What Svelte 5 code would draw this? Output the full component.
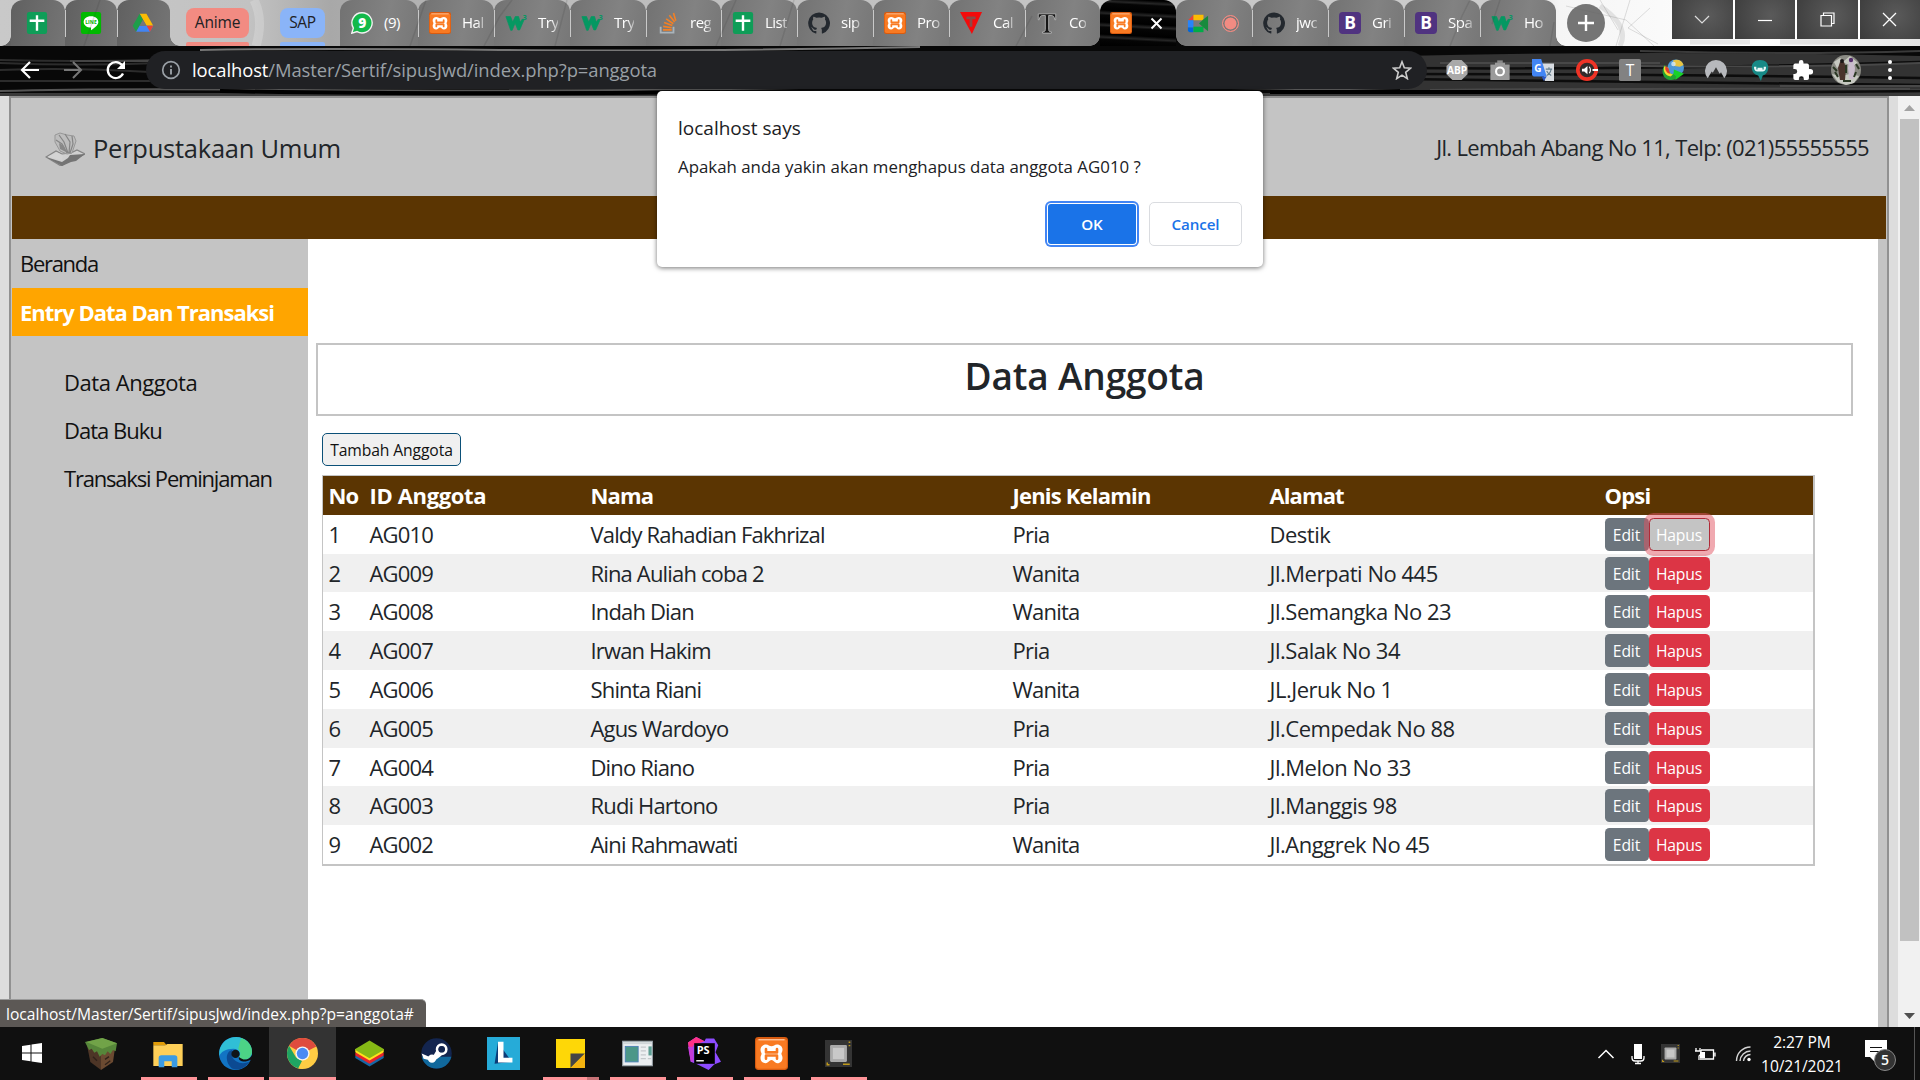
<script>
  const pinned = [
    { icon: 'sheet', w: 54 },
    { icon: 'line', w: 52 },
    { icon: 'drive', w: 53 }
  ];
  const tabs = [
    { icon: 'whatsapp', label: '(9)', w: 78 },
    { icon: 'xampp', label: 'Hal', w: 76 },
    { icon: 'w3', label: 'Try', w: 76 },
    { icon: 'w3', label: 'Try', w: 76 },
    { icon: 'stack', label: 'reg', w: 75 },
    { icon: 'sheet', label: 'List', w: 76 },
    { icon: 'github', label: 'sip', w: 76 },
    { icon: 'xampp', label: 'Pro', w: 76 },
    { icon: 'vred', label: 'Cal', w: 76 },
    { icon: 'tserif', label: 'Co', w: 75 }
  ];
  const tabsAfter = [
    { icon: 'meet', label: '', rec: true, w: 76 },
    { icon: 'github', label: 'jwc', w: 76 },
    { icon: 'boot', label: 'Gri', w: 76 },
    { icon: 'boot', label: 'Spa', w: 76 },
    { icon: 'w3', label: 'Ho', w: 76 }
  ];
  const extensions = ['abp', 'camera', 'translate', 'volume', 'tbox', 'idm', 'nord', 'ghost', 'puzzle'];
  const members = [
    ['AG010', 'Valdy Rahadian Fakhrizal', 'Pria', 'Destik'],
    ['AG009', 'Rina Auliah coba 2', 'Wanita', 'Jl.Merpati No 445'],
    ['AG008', 'Indah Dian', 'Wanita', 'Jl.Semangka No 23'],
    ['AG007', 'Irwan Hakim', 'Pria', 'Jl.Salak No 34'],
    ['AG006', 'Shinta Riani', 'Wanita', 'JL.Jeruk No 1'],
    ['AG005', 'Agus Wardoyo', 'Pria', 'Jl.Cempedak No 88'],
    ['AG004', 'Dino Riano', 'Pria', 'Jl.Melon No 33'],
    ['AG003', 'Rudi Hartono', 'Pria', 'Jl.Manggis 98'],
    ['AG002', 'Aini Rahmawati', 'Wanita', 'Jl.Anggrek No 45']
  ];
  const apps = [
    { icon: 'grass', size: 32 },
    { icon: 'folder', size: 32, run: true },
    { icon: 'edge', size: 33, run: true },
    { icon: 'chrome', size: 31, run: true, active: true },
    { icon: 'blue', size: 31 },
    { icon: 'steam', size: 31 },
    { icon: 'ltile', size: 33 },
    { icon: 'notes', size: 29, run: true, stacked: true },
    { icon: 'window', size: 31, run: true },
    { icon: 'ps', size: 33, run: true },
    { icon: 'xampp', size: 33, run: true },
    { icon: 'chip', size: 27, run: true }
  ];
</script>

{#snippet icon(name, size)}
  <svg class="ic" width={size} height={size} viewBox="0 0 24 24">
    {#if name === 'sheet'}
      <rect x="1" width="22" height="24" rx="2.5" fill="#0f9d58" />
      <path d="M12 3.5v17M4 9.5h16" stroke="#fff" stroke-width="2.6" />
    {:else if name === 'line'}
      <rect x="1" width="22" height="24" rx="2.5" fill="#00b900" />
      <path d="M12 4.5c5 0 8 2.9 8 6.3 0 3.7-4.500 6.200-8 9.200v-3c-4.500-.2-8-2.800-8-6.200s3-6.300 8-6.300z" fill="#fff" />
      <text x="12" y="13" font-size="5.500" font-weight="700" text-anchor="middle" fill="#00b900">LINE</text>
    {:else if name === 'drive'}
      <path d="M8.300 2h7.400l7.500 13h-7.300z" fill="#fbbc04" />
      <path d="M8.300 2L.8 15l3.700 6.500L12 8.500z" fill="#1e9e4a" />
      <path d="M8.200 15h15l-3.700 6.500h-15z" fill="#4285f4" />
      <path d="M15.900 15h7.300l-3.600 6.500z" fill="#ea4335" />
      <path d="M12 8.500l3.900 6.500H8.200z" fill="#777" />
    {:else if name === 'whatsapp'}
      <path d="M12 .8a11 11 0 1 1-5.300 20.600L.8 23.200l1.800-5.700A11 11 0 0 1 12 .8z" fill="#12b94a" stroke="#f2f2f2" stroke-width="1.500" />
      <text x="12.200" y="17.200" font-size="15" font-weight="800" text-anchor="middle" fill="#fff">9</text>
    {:else if name === 'xampp'}
      <rect width="24" height="24" rx="2.500" fill="#d85b10" />
      <rect x=".8" y="1.500" width="22.400" height="21.500" rx="2" fill="#f97a22" />
      <path d="M2.500 2h19" stroke="#ffc39a" stroke-width="1" />
      <path d="M8 5.500c1.800 0 2.400 1.300 4 1.300s2.200-1.300 4-1.300c2.400 0 4 1.700 4 3.700 0 1.500-.8 2.200-.8 3s.8 1.500.8 3c0 2.200-1.500 3.800-3.700 3.800-2.300 0-2.600-2.200-4.300-2.200S10 19 7.700 19C5.500 19 4 17.400 4 15.200c0-1.500.8-2.200.8-3S4 10.700 4 9.200c0-2 1.600-3.700 4-3.700z" fill="#fff" />
      <path d="M8 8.800v2.400h8V8.800M8 15.800v-2.300h8v2.300" fill="none" stroke="#f97a22" stroke-width="1.900" stroke-linecap="round" stroke-linejoin="round" />
    {:else if name === 'w3'}
      <path d="M1 5h5l2.500 6L11.200 5h3.600l1.800 6.200 2-3.200h2.400l-5 11.500h-2l-3-7.500L7.800 20H6.200z" fill="#059862" stroke="#059862" stroke-width=".8" />
      <text x="21.500" y="8.500" font-size="8" font-weight="700" text-anchor="middle" fill="#059862">3</text>
    {:else if name === 'stack'}
      <path d="M4 16v6.500h14V16" fill="none" stroke="#a9b4bb" stroke-width="2" />
      <path d="M6.500 19.500h9.500M6.700 15.700l9.300 1.400M7.800 11.500l8.900 3.300M10 7.500l7.800 5.300M13.500 3.500l5.700 7.500M18 1l2.500 8.500" stroke="#f48024" stroke-width="1.700" />
    {:else if name === 'github'}
      <path d="M12 .5a11.800 11.800 0 0 0-3.700 23c.6.1.8-.3.8-.6v-2.200c-3.300.7-4-1.400-4-1.400-.5-1.400-1.300-1.800-1.300-1.800-1-.7.100-.7.100-.7 1.200.1 1.800 1.200 1.800 1.200 1 1.800 2.800 1.300 3.500 1 .1-.8.400-1.300.7-1.600-2.600-.3-5.400-1.300-5.400-5.900 0-1.300.5-2.300 1.200-3.200-.1-.3-.5-1.500.1-3.200 0 0 1-.3 3.300 1.200a11.500 11.500 0 0 1 6 0c2.300-1.500 3.300-1.200 3.300-1.200.6 1.700.2 2.900.1 3.200.8.900 1.200 1.900 1.200 3.200 0 4.600-2.800 5.600-5.500 5.900.5.400.9 1.100.9 2.200v3.300c0 .3.200.7.800.6A11.800 11.800 0 0 0 12 .5z" fill="#24292f" />
    {:else if name === 'vred'}
      <path d="M0 0h24L13 24z" fill="#f30b0b" />
      <path d="M7 5h10v3h-3.500v8h-3V8H7z" fill="#8c4a46" />
    {:else if name === 'tserif'}
      <path d="M2.500 2h19v6.500h-1C20 5 19 3.800 16.500 3.800h-2.700V19c0 2 .8 2.500 3 2.600V23H7.200v-1.400c2.200-.1 3-.6 3-2.600V3.800H7.500C5 3.800 4 5 3.500 8.500h-1z" fill="#161616" stroke="#c9c9c9" stroke-width=".8" />
    {:else if name === 'meet'}
      <path d="M1 9l6-6v6z" fill="#ea4335" /><path d="M7 3h11v6H7z" fill="#fbbc04" />
      <path d="M1 9h6v8H1z" fill="#2684fc" /><path d="M1 17h6v5H3a2 2 0 0 1-2-2z" fill="#0066da" />
      <path d="M7 16h11v6H7z" fill="#00ac47" /><path d="M13 12.500L18 8l5-4v17l-5-4z" fill="#188a3d" />
    {:else if name === 'boot'}
      <rect width="24" height="24" rx="4" fill="#503380" />
      <text x="12" y="19" font-size="19" font-weight="700" text-anchor="middle" fill="#fff">B</text>
    {:else if name === 'abp'}
      <path d="M7 1h10l6.500 6.500v9L17 23H7L.5 16.500v-9z" fill="#a9a9a9" />
      <text x="12" y="16.300" font-size="12" font-weight="700" text-anchor="middle" textLength="22" lengthAdjust="spacingAndGlyphs" fill="#fff">ABP</text>
    {:else if name === 'camera'}
      <path d="M1.500 6h5v-2h11v2h5v17h-21z" fill="#9b9b9b" /><rect x="9" y="1.500" width="6" height="3" fill="#8a8a8a" />
      <circle cx="12" cy="13.500" r="4.300" fill="#999" stroke="#fff" stroke-width="2.300" />
    {:else if name === 'translate'}
      <path d="M10 5h14v19H14z" fill="#d7dbe0" /><path d="M0 0h10l6 19H2a2 2 0 0 1-2-2z" fill="#4285f4" />
      <path d="M10.500 19H16l-3 5z" fill="#2a56c6" />
      <text x="6.500" y="14" font-size="11" font-weight="700" text-anchor="middle" fill="#fff">G</text>
      <path d="M15 11h7M18.500 9v2M21 11c-1 4-3 6-5 7M16 13c1 2 3 4 5 5" stroke="#647d8c" fill="none" stroke-width="1.200" />
    {:else if name === 'volume'}
      <circle cx="12" cy="12" r="10" fill="#332b2a" stroke="#ef3326" stroke-width="4" />
      <path d="M6.500 10.500h2.500l3.500-3v9l-3.500-3H6.500zM18 11h6v2h-6z" fill="#fff" /><path d="M14.500 8.500q2.500 3.500 0 7" fill="none" stroke="#fff" stroke-width="1.200" />
    {:else if name === 'tbox'}
      <rect x="0" width="24" height="24" rx="2" fill="#828282" />
      <text x="12" y="18" font-size="17" text-anchor="middle" fill="#fff">T</text>
    {:else if name === 'idm'}
      <circle cx="15" cy="9.500" r="9" fill="#4c97d6" /><path d="M12 1.500c5-2 10 0 11.500 5l-4 2-6-1z" fill="#e7c443" /><circle cx="12.500" cy="5.500" r="2.500" fill="#d9ecf8" opacity=".8" />
      <path d="M3 6.500C-1 12 0 20 7 22.500c4 1.300 8 0 10.500-2.500l-5-4c-3 1-5.500-1-5.500-5z" fill="#22a332" />
      <path d="M2.500 8c-2 6 2 11 7 11l2.500-2.500C8 16 6.500 13 7 9.500z" fill="#f5d832" /><path d="M4 7.500c-1.500 4 1 8 5 8.500l-2-6z" fill="#e23b2e" />
      <path d="M13 11.500L24 16l-9.500 7 1-4.500-3-1.500z" fill="#18d227" />
    {:else if name === 'nord'}
      <path d="M3 21A12 12 0 1 1 21 21l-3.500-6.500-1.500 1.500L12 9l-3.500 6-1.200-1.500z" fill="#b7b9bd" />
    {:else if name === 'ghost'}
      <path d="M12 1c6 0 9 3.500 9 8s-2 8-6 9l-2 6-3-6C6 17 3 14 3 9s4-8 9-8z" fill="#178a87" />
      <path d="M5.500 8.500h2.500v3h1.300V9.500h5.400v2H16v-3h2.500v1.500c-.5 2.500-2 3.500-3.500 3.500h-6c-1.500 0-3-1-3.500-3.500z" fill="#e9f7f7" />
    {:else if name === 'puzzle'}
      <path d="M20 11h-1.500V7a2 2 0 0 0-2-2h-4V3.500a2.500 2.500 0 0 0-5 0V5h-4a2 2 0 0 0-2 2v4H3a2.700 2.700 0 0 1 0 5.400H1.500V21a2 2 0 0 0 2 2h4v-1.500a2.700 2.700 0 0 1 5.400 0V23h3.600a2 2 0 0 0 2-2v-4H20a3 3 0 0 0 0-6z" fill="#fff" />
    {:else if name === 'grass'}
      <path d="M1 3L12 8 12 24 4 18z" fill="#4d3526" /><path d="M23 4L12 8v16l9-6z" fill="#6b4a31" />
      <path d="M0 3L13 0l11 4-1 6-2-1-2 3-2-2-2 3-2-1-2 2-2-4-2 1-2-3-2 1z" fill="#56863a" /><path d="M1 3l12-3 11 4-11 4z" fill="#71a348" />
      <path d="M6 14l3 3M15 16l3-2M15 20l4-3" stroke="#30221a" stroke-width="1" />
    {:else if name === 'folder'}
      <path d="M1 3h8l2 2.500H1z" fill="#e19c08" /><path d="M1 5.500h9L11.500 4.500H23v16.500H1z" fill="#fecf58" />
      <path d="M5 22v-7a2 2 0 0 1 2-2h10a2 2 0 0 1 2 2v7h-4.200v-4.500H9.200V22z" fill="#3a9be4" />
    {:else if name === 'edge'}
      <circle cx="12" cy="12" r="12" fill="#1274c4" />
      <path d="M.2 10.500C1.300 4 6.500 0 12.500 0 19 0 24 4.800 24 10.500c0 3.500-2.500 6-6 6-4 0-3.500-1.500-3-2.500 1-2.500-1-5.500-4.500-5.500C5 8.500 1 11 .2 14z" fill="#30bfd6" />
      <path d="M16 .7c4.800 1.500 8 5.500 8 9.800 0 3.500-2.500 6-6 6-4 0-3.500-1.500-3-2.500 1-2 .5-4-1-5.500z" fill="#54d872" opacity=".8" />
      <path d="M9.500 9.500C5 10.500 4 18 9 22.500c4 2.500 10 .5 13-4.500-5 2.300-11 .5-12.500-4z" fill="#0c4a92" />
      <path d="M14.500 14.500c-1 3 4 4.500 8.500 2l2 1.500v-6l-2 2.500c-3 3-6 2-8.500 0z" fill="#111" />
      <circle cx="12" cy="12.300" r="3" fill="#101418" />
    {:else if name === 'chrome'}
      <circle cx="12" cy="12" r="12" fill="#fc4" />
      <path d="M12 12L1.600 6A12 12 0 0 1 22.400 6z" fill="#df4b3e" /><path d="M12 6h10.400l.3.600L12 12z" fill="#df4b3e" />
      <path d="M1.600 6L7 15l5 3-3 5.600A12 12 0 0 1 1.600 6z" fill="#1fa463" /><path d="M17 14.500L12 24a12 12 0 0 1-3.300-.5L12 17z" fill="#fc4" />
      <circle cx="12" cy="12" r="5.500" fill="#f4f4f4" /><circle cx="12" cy="12" r="4.400" fill="#4a8af4" />
    {:else if name === 'blue'}
      <path d="M1 15.500L12 22l11-6.500v-2H1z" fill="#1767a5" /><path d="M1 13.500L12 20l11-6.500v-2H1z" fill="#e6242b" />
      <path d="M1 11L12 17.500 23 11V8.500H1z" fill="#ffe11c" /><path d="M1 8.500L12 2l11 6.500v.7L12 15.700 1 9.200z" fill="#86b915" />
    {:else if name === 'steam'}
      <circle cx="12" cy="12" r="11.800" fill="#13254f" /><path d="M.5 14.500h23A11.800 11.800 0 0 1 .5 14.500z" fill="#10689c" />
      <circle cx="16" cy="8.700" r="3.600" fill="#13254f" stroke="#fff" stroke-width="2" /><circle cx="8.500" cy="16" r="3.200" fill="#fff" />
      <path d="M.5 12l8 3.500L12 9.500l4 4-6 4.500-8-2z" fill="#fff" /><circle cx="16" cy="8.700" r="2.300" fill="#13254f" />
    {:else if name === 'ltile'}
      <rect width="24" height="24" fill="#26abd8" /><path d="M8 4L5.500 19.500 18 18z" fill="#0c3c78" />
      <path d="M8 3.500h4v11.500h6.500v3.500H8z" fill="#fff" />
    {:else if name === 'notes'}
      <path d="M0 0h24v24H0z" fill="#fed707" /><path d="M12 12h12L12 24z" fill="#454545" /><path d="M24 12v12H12z" fill="#f4b310" />
    {:else if name === 'window'}
      <rect x=".5" y="2.500" width="23" height="19" fill="#eceff1" stroke="#9aa4aa" stroke-width=".8" />
      <rect x="2.500" y="6.500" width="10" height="12" fill="#4c9788" stroke="#4a7fb5" stroke-width=".7" />
      <path d="M14.500 7h4M14.500 10h4M14.500 13h4M14.500 16h4M20 16h2.500" stroke="#c3c8cb" /><rect x="20.500" y="6.500" width="2.500" height="7" fill="#5c9d93" />
      <path d="M1 4h22" stroke="#cfd5d8" stroke-width="1.500" />
    {:else if name === 'ps'}
      <path d="M0 4l6-4 6 3 1-2h6l3 5-2 5 4 7-5 2-4 4-8-4-5-2z" fill="#8d4bff" /><path d="M0 4l6-4 6 3-8 3-2 11z" fill="#ff3185" />
      <path d="M0 7l4 0v11l-2 0z" fill="#c33bd8" />
      <rect x="4.500" y="4.500" width="15" height="15" fill="#000" />
      <text x="11" y="12" font-size="8" font-weight="700" text-anchor="middle" fill="#fff">PS</text><path d="M6 17.300h5.500" stroke="#fff" stroke-width="1" />
    {:else if name === 'chip'}
      <rect x="0" y="0" width="24" height="24" fill="#343434" /><rect x="4.500" y="4.500" width="15" height="15" rx="1" fill="#aaa" />
      <rect x="7" y="7" width="10" height="10" fill="#c8c8c8" /><path d="M2 20v2h2M16 21.500h6M21 2h1.500M21 5h1.500" stroke="#c09a1b" stroke-width="1.300" fill="none" />
    {/if}
  </svg>
{/snippet}

{#snippet tab(t)}
  <div class="tab" style:width="{t.w}px">
    {@render icon(t.icon, 22)}
    {#if t.rec}<span class="rec"></span>{:else}<span class="tab-label" class:full={t.label === '(9)'}>{t.label}</span>{/if}
  </div>
{/snippet}

<div class="screen">
  <header class="strip">
    <svg class="art" width="1920" height="46" viewBox="0 0 1920 46">
      <g fill="none" stroke="#666" stroke-opacity=".2">
        <path d="M254 0q10 20 2 46" stroke-width="9" stroke="#fff" />
        <path d="M1566 6l60 14 28 26M1600 0l18 30M1630 0l-14 46M1650 8l-22 20 30 16" stroke-width="1" />
        <path d="M1600 6q30 20 20 40M1690 42h60M1780 42h60" stroke-width="5" stroke-opacity=".15" />
      </g>
    </svg>
    <div class="run first">
      {#each pinned as p}
        <div class="tab pin" style:width="{p.w}px">{@render icon(p.icon, 22)}</div>
      {/each}
    </div>
    <div class="groups">
      <span class="group anime">Anime</span>
      <span class="group sap">SAP</span>
    </div>
    <div class="run">
      {#each tabs as t}{@render tab(t)}{/each}
    </div>
    <div class="tab current">
      {@render icon('xampp', 22)}
      <svg width="13" height="13" viewBox="0 0 13 13"><path d="M1.500 1.500l10 10M11.500 1.500l-10 10" stroke="#fff" stroke-width="2" /></svg>
    </div>
    <div class="run">
      {#each tabsAfter as t}{@render tab(t)}{/each}
    </div>
    <div class="plus">
      <svg width="18" height="18" viewBox="0 0 18 18"><path d="M9 1v16M1 9h16" stroke="#fff" stroke-width="2.400" /></svg>
    </div>
    <div class="winctl">
      <span><svg width="16" height="10" viewBox="0 0 16 10"><path d="M1 1l7 7 7-7" fill="none" stroke="#ddd" stroke-width="1.200" /></svg></span>
      <span><svg width="14" height="10" viewBox="0 0 14 10"><path d="M0 5.500h14" stroke="#fff" stroke-width="1.200" /></svg></span>
      <span><svg width="15" height="15" viewBox="0 0 15 15"><path d="M1 3.500h10.500V14H1zM3.500 3.500V1H14v10.500h-2.500" fill="none" stroke="#fff" stroke-width="1.200" /></svg></span>
      <span><svg width="15" height="15" viewBox="0 0 15 15"><path d="M1 1l13 13M14 1L1 14" stroke="#fff" stroke-width="1.300" /></svg></span>
    </div>
    <svg class="art" width="1560" height="46" viewBox="0 0 1560 46">
      <g fill="none" stroke="#333" stroke-opacity=".14">
        <path d="M484 46l16-30 12-16M555 46l12-46M410 46l16-46M100 0l-16 46M716 46l20-46M780 46l14-46M1016 46l16-30M1450 46l12-30 8-16M1500 0l-8 24M1550 46l4-24" stroke-width="1.500" />
      </g>
    </svg>
  </header>

  <div class="toolbar">
    <svg class="art" width="1920" height="50" viewBox="0 0 1920 50" preserveAspectRatio="none">
      <rect width="1920" height="50" fill="#080808" />
      <path d="M1400 10q260-6 520 0v40h-520z" fill="#333" />
      <g fill="none" stroke-width="2">
        <path d="M0 14q80 2 150 0M0 24q70-3 150 2M0 35h150M0 17q80 3 160 0" stroke="#2c2c2c" />
        <path d="M70 15h80" stroke="#444" />
        <path d="M0 45q100-3 300-1t500-2 600 3 520-1" stroke="#555" stroke-width="2" />
        <path d="M0 49h1920" stroke="#3a3a3a" stroke-width="4" />
        <path d="M1400 28q250 0 520 4M1400 33q250 3 520 6M1500 46q200 2 420-1M1400 22q240 2 520-6" stroke="#0c0c0c" stroke-width="2.500" />
        <path d="M1640 20q150 2 280-3M1430 44q240-2 480-1M1440 17h220M1780 40h140" stroke="#484848" />
        <path d="M220 45q200 4 500 1M1270 46h260" stroke="#000" stroke-width="4" />
        <path d="M200 4q120-2 300 0t420-3" stroke="#777" />
        <path d="M1640 5q150 4 280 0" stroke="#3a3a3a" />
      </g>
    </svg>
    <div class="nav">
      <svg width="20" height="20" viewBox="0 0 20 20"><path d="M19 10H2M10 2l-8 8 8 8" fill="none" stroke="#fff" stroke-width="2.200" /></svg>
      <svg width="20" height="20" viewBox="0 0 20 20"><path d="M1 10h17M10 2l8 8-8 8" fill="none" stroke="#777" stroke-width="2" /></svg>
      <svg width="20" height="20" viewBox="0 0 20 20"><path d="M17 13.500A8 8 0 1 1 16 5" fill="none" stroke="#fff" stroke-width="2.300" /><path d="M19 1v8h-8z" fill="#fff" /></svg>
    </div>
    <div class="omni">
      <svg width="20" height="20" viewBox="0 0 20 20"><circle cx="10" cy="10" r="8.300" fill="none" stroke="#9aa0a6" stroke-width="1.700" /><path d="M10 9v5.500M10 5.500v2" stroke="#9aa0a6" stroke-width="1.900" /></svg>
      <span class="url"><b>localhost</b>/Master/Sertif/sipusJwd/index.php?p=anggota</span>
      <svg width="20" height="20" viewBox="0 0 20 20"><path d="M10 1.800l2.300 6 6.300.4-4.900 4.100 1.600 6.300-5.300-3.500-5.300 3.500 1.600-6.300L1.400 8.200l6.300-.4z" fill="none" stroke="#ccc" stroke-width="1.600" /></svg>
    </div>
    <div class="exts">
      {#each extensions as e}<span>{@render icon(e, 22)}</span>{/each}
      <span class="face">
        <svg width="30" height="30" viewBox="0 0 30 30">
          <circle cx="15" cy="15" r="15" fill="#8b8b84" /><path d="M3 7l6-4 4 3 6-5 8 7-5 3-9-3-7 5zM1 19l8 2 10-2 9 2-5 7-8 2-8-3z" fill="#c7c9c1" />
          <path d="M9 7h4l2 6-1 12h-5L7 13z" fill="#4a332c" /><path d="M18 5h4l2 8-1 11h-5l-1-11z" fill="#c9bccb" /><circle cx="11" cy="6" r="2" fill="#1a1717" /><circle cx="20" cy="5" r="2.200" fill="#54306a" /><path d="M2 12l4 4M25 9l3 5M12 26h8M4 17l3 5M25 17l-2 5M15 10v8" stroke="#2b3824" stroke-width="2" />
        </svg>
      </span>
      <span class="dots"><i></i><i></i><i></i></span>
    </div>
  </div>

  <main class="viewport">
    <div class="page">
      <div class="banner">
        <svg width="40" height="34" viewBox="0 0 40 34">
          <path d="M1 25l10-6 6 3 9-1 6-3 8 4-9 4-4 1-11 7z" fill="#d0d0d0" stroke="#858585" stroke-width="1.200" /><path d="M1 25l16 5 6-4 2-3 15-1-9 7-5 1-9 4z" fill="#747474" />
          <path d="M3 24.500l9-4 6 3-1 5z" fill="#d4d4d4" />
          <path d="M10 3l5-2 7 2 7 1 2 5-4 12-5 1-7-3-5-9z" fill="#bdbdbd" stroke="#979797" stroke-width="1" /><path d="M14 3l5 7 4 11M20 2l5 8-1 11M11 8l6 4 5 9M27 4l1 8-3 9" fill="none" stroke="#858585" stroke-width="1.200" /><path d="M14 11l5 3 2 6-6-3z" fill="#888" />
        </svg>
        <span class="brand">Perpustakaan Umum</span>
        <span class="address">Jl. Lembah Abang No 11, Telp: (021)55555555</span>
      </div>
      <div class="brown"></div>
      <div class="columns">
        <nav class="side">
          <a class="home">Beranda</a>
          <a class="entry">Entry Data Dan Transaksi</a>
          <div class="sub">
            <a>Data Anggota</a>
            <a class="mid">Data Buku</a>
            <a class="tight">Transaksi Peminjaman</a>
          </div>
        </nav>
        <section class="content">
          <h1>Data Anggota</h1>
          <button class="add">Tambah Anggota</button>
          <div class="table">
            <div class="tr th"><span>No</span><span>ID Anggota</span><span>Nama</span><span>Jenis Kelamin</span><span>Alamat</span><span>Opsi</span></div>
            {#each members as m, i}
              <div class="tr">
                <span>{i + 1}</span>
                {#each m as cell}<span>{cell}</span>{/each}
                <span class="acts"><button class="edit">Edit</button><button class="del" class:focus={i === 0}>Hapus</button></span>
              </div>
            {/each}
          </div>
        </section>
      </div>
    </div>
    <div class="scroll">
      <svg width="22" height="23" viewBox="0 0 22 23"><path d="M6 15l5.500-6 5.500 6z" fill="#a3a3a3" /></svg>
      <div class="thumb"></div>
      <svg width="22" height="23" viewBox="0 0 22 23"><path d="M6 9l5.500 6L17 9z" fill="#505050" /></svg>
    </div>
  </main>

  <footer class="taskbar">
    <div class="start"><svg width="20" height="20" viewBox="0 0 20 20"><path d="M0 3l8.500-1.200v7.700H0zM9.500 1.600L20 0v9.500H9.500zM0 10.500h8.500v7.700L0 17zM9.500 10.500H20V20L9.500 18.400z" fill="#fff" /></svg></div>
    {#each apps as a}
      <div class="app" class:run-on={a.run} class:active={a.active} class:stacked={a.stacked}>{@render icon(a.icon, a.size)}</div>
    {/each}
    <div class="tray">
      <svg width="18" height="12" viewBox="0 0 18 12"><path d="M1.500 10L9 2.500l7.500 7.500" fill="none" stroke="#fff" stroke-width="1.500" /></svg>
      <svg width="14" height="22" viewBox="0 0 14 22"><rect x="3" y="1" width="8" height="15" fill="#fff" /><path d="M1 13v2q0 3 3 3h6q3 0 3-3v-2M7 18v3M4 20.500h6" fill="none" stroke="#fff" stroke-width="1.300" /></svg>
      {@render icon('chip', 19)}
      <svg class="batt" width="22" height="16" viewBox="0 0 22 16"><path d="M7 4h12.500v9H6M21 6.500v4M2 2v3M6 2v3M1 5h6v3l-2 2v4" fill="none" stroke="#fff" stroke-width="1.300" /><rect x="6" y="6" width="5" height="6" fill="#fff" /></svg>
      <svg width="17" height="17" viewBox="0 0 17 17"><path d="M1.500 16A14 14 0 0 1 15.500 2M5 16A10.500 10.500 0 0 1 15.500 6M8.500 16a7 7 0 0 1 7-6.500" fill="none" stroke="#d5d5d5" stroke-width="1.400" /><circle cx="14" cy="14.500" r="1.700" fill="#fff" /></svg>
      <div class="clock"><span>2:27 PM</span><span class="date">10/21/2021</span></div>
      <div class="notif">
        <svg width="23" height="25" viewBox="0 0 23 25"><path d="M0 1h22v17H11v6l-6-6H0z" fill="#fff" /><path d="M5 8.500h12M5 12.500h12" stroke="#111" stroke-width="1.200" /></svg>
        <b>5</b>
      </div>
    </div>
  </footer>

  <div class="status">localhost/Master/Sertif/sipusJwd/index.php?p=anggota#</div>

  <div class="dialog">
    <div class="says">localhost says</div>
    <div class="msg">Apakah anda yakin akan menghapus data anggota AG010 ?</div>
    <div class="btns"><button class="ok">OK</button><button class="cancel">Cancel</button></div>
  </div>
</div>

<style>
  :global(body) { margin: 0; overflow: hidden; }
  .screen { position: relative; width: 1920px; height: 1080px; display: flex; flex-direction: column; overflow: hidden; font-family: "Open Sans", "Noto Sans", sans-serif; color: #212529; background: #111; }
  .screen * { box-sizing: border-box; }
  button { font-family: inherit; padding: 0; margin: 0; border: 0; }
  .ic { display: block; flex: none; }
  .art { position: absolute; left: 0; top: 0; pointer-events: none; }

  .strip { position: relative; height: 46px; flex: none; display: flex; background: linear-gradient(90deg, #c9c9c9 0, #c2c2c2 250px, #a8a8a8 330px, #bbb 500px, #ccc 1500px, #f5f5f5 1560px, #fff 1760px, #e5e5e5); }
  .run { position: relative; display: flex; }
  .run::after { content: ""; position: absolute; right: -10px; bottom: 0; width: 10px; height: 10px; background: radial-gradient(circle at 100% 0, transparent 9.500px, #757575 10px); }
  .first { margin-left: 11px; }
  .first::before { content: ""; position: absolute; left: -10px; bottom: 0; width: 10px; height: 10px; background: radial-gradient(circle at 0 0, transparent 9.500px, #606060 10px); }
  .tab { position: relative; height: 46px; display: flex; align-items: center; padding-left: 11px; border-radius: 12px 12px 0 0; background: linear-gradient(100deg, #727272, #828282 60%, #777); }
  .tab + .tab::before { content: ""; position: absolute; left: 0; top: 10px; width: 1px; height: 27px; background: #c9c9c9; }
  .pin { padding-left: 15px; background: linear-gradient(100deg, #606060, #757575); }
  .tab-label { margin-left: 11px; white-space: nowrap; font-size: 15px; letter-spacing: -.5px; line-height: 20px; margin-top: -2px; color: #fff; mask-image: linear-gradient(90deg, #000 65%, rgba(0, 0, 0, .4)); }
  .tab-label.full { mask-image: none; }
  .rec { width: 17px; height: 17px; margin-left: 13px; border-radius: 50%; border: 1.500px solid #f28b82; background: #f28b82; box-shadow: inset 0 0 0 1.500px #777; }
  .groups { width: 170px; display: flex; padding: 8px 0 0 16px; gap: 31px; }
  .group { position: relative; height: 30px; width: 63px; border-radius: 8px; text-align: center; font-size: 15.500px; line-height: 29px; color: #202124; letter-spacing: -.2px; }
  .group::after { content: ""; position: absolute; left: 0; right: 0; top: 34px; height: 4px; background: inherit; border-radius: 2px 2px 0 0; }
  .anime { background: #f28b82; }
  .sap { width: 45px; background: #8ab4f8; letter-spacing: -.3px; }
  .current { width: 76px; background: repeating-linear-gradient(3deg, #000 0, #050505 7px, #262626 9px, #000 12px); padding-left: 10px; gap: 18px; z-index: 1; }
  .current::after { content: ""; position: absolute; left: -10px; right: -10px; bottom: 0; height: 10px; background: radial-gradient(circle at 0 0, transparent 9.500px, #080808 10px) left / 10px 10px no-repeat, radial-gradient(circle at 100% 0, transparent 9.500px, #080808 10px) right / 10px 10px no-repeat; }
  .plus { margin: 4px 0 0 11px; width: 38px; height: 38px; border-radius: 50%; background: #757575; display: flex; align-items: center; justify-content: center; }
  .winctl { position: relative; margin-left: auto; display: flex; height: 39px; width: 248px; gap: 2px; background: #fff; }
  .winctl span { flex: 1; display: flex; align-items: center; justify-content: center; background: radial-gradient(circle at 60% 40%, #5a5a5a, #3c3c3c); }

  .toolbar { position: relative; height: 50px; flex: none; display: flex; align-items: flex-start; padding-top: 5px; }
  .nav { position: relative; width: 146px; height: 38px; padding-left: 20px; display: flex; align-items: center; gap: 23px; }
  .omni { position: relative; width: 1281px; height: 38px; border-radius: 19px; background: #202124; display: flex; align-items: center; padding: 0 15px; }
  .url { margin-left: 11px; flex: 1; font-size: 18.400px; line-height: 36px; color: #9aa0a6; letter-spacing: -.08px; white-space: nowrap; }
  .url b { font-weight: 400; color: #fff; }
  .exts { position: relative; height: 38px; display: flex; align-items: center; margin-left: 8px; }
  .exts span { width: 43.300px; display: flex; justify-content: center; }
  .exts .dots { flex-direction: column; align-items: center; gap: 4px; }
  .dots i { width: 4px; height: 4px; border-radius: 50%; background: #fff; }

  .viewport { flex: 1; display: flex; background: #ddd; min-height: 0; }
  .page { width: 1880px; margin: 0 9px; border: 2px solid #919191; border-bottom: 0; background: #c4c4c4; display: flex; flex-direction: column; overflow: hidden; padding: 0 1px; }
  .banner { height: 98px; flex: none; display: flex; align-items: center; padding: 4px 17px 0 33px; }
  .brand { margin-left: 8px; font-size: 25.500px; letter-spacing: -.25px; margin-top: -3px; }
  .address { margin-left: auto; font-size: 22px; letter-spacing: -.66px; margin-top: -4px; }
  .brown { height: 43px; flex: none; background: #5b3502; }
  .columns { flex: 1; display: flex; }
  .side { width: 296px; font-size: 22px; letter-spacing: -.45px; color: #111; }
  .side a { display: block; white-space: nowrap; }
  .home { height: 49px; padding-left: 8px; line-height: 49px; letter-spacing: -1.300px; }
  .entry { height: 48px; padding-left: 8px; line-height: 49px; background: #ffa500; color: #fff; font-weight: 700; letter-spacing: -1.020px; }
  .sub { padding: 23px 0 0 52px; }
  .sub a { height: 48px; line-height: 47px; }
  .sub .mid { letter-spacing: -1px; }
  .sub .tight { letter-spacing: -1.200px; }
  .content { width: 1570px; background: #fff; padding: 104px 25px 0 8px; }
  h1 { margin: 0; height: 73px; border: 2px solid #c4c4c4; text-align: center; font-size: 37px; line-height: 62px; font-weight: 600; letter-spacing: -.15px; }
  .add { display: block; margin: 17px 0 9px 6px; width: 139px; height: 33px; border: 1px solid #0b5078; border-radius: 5px; background: #f0f0f0; font-size: 15.700px; letter-spacing: -.12px; color: #111; white-space: nowrap; }
  .table { margin-left: 6px; width: 1493px; height: 391px; border: 1px solid #c4c4c4; border-right-width: 2px; border-bottom-width: 2px; font-size: 22px; letter-spacing: -.8px; }
  .tr { display: grid; grid-template-columns: 41px 221px 422px 257px 335px 1fr; height: 38.800px; padding-left: 5.500px; line-height: 39px; white-space: nowrap; }
  .tr:nth-child(odd) { background: #f0f0f0; }
  .tr span:nth-child(3) { letter-spacing: -.84px; }
  .tr span:nth-child(5) { letter-spacing: -.48px; }
  .tr.th { background: #5b3502; color: #fff; font-weight: 700; }
  .tr.th span:nth-child(2) { letter-spacing: -.35px; }
  .tr.th span:nth-child(5) { letter-spacing: -.9px; }
  .acts { display: flex; padding-top: 3px; }
  .acts button { height: 33px; border-radius: 4.500px; color: #fff; font-size: 15.700px; letter-spacing: -.15px; line-height: 35px; }
  .edit { width: 44px; background: #6c757d; }
  .del { width: 61px; background: #dc3545; }
  .acts .del.focus { background: #c4c4c4; border: 1px solid #b02a37; line-height: 33px; box-shadow: 0 0 0 5px rgba(225, 83, 97, .5); }
  .scroll { width: 22px; background: #f1f1f1; display: flex; flex-direction: column; }
  .thumb { height: 822px; margin: 0 1px 63px 2px; background: #c1c1c1; }

  .taskbar { height: 53px; flex: none; display: flex; background: #101010; }
  .start { width: 68px; padding: 16px 0 0 22px; }
  .app { position: relative; width: 67px; display: flex; align-items: center; justify-content: center; padding-right: 1px; }
  .active { background: #333; }
  .run-on::after { content: ""; position: absolute; left: 6px; right: 5px; bottom: 0; height: 3px; background: #ff9499; }
  .active.run-on::after { left: 0; right: 0; }
  .stacked.run-on::after { background: linear-gradient(90deg, #ff9499 44px, #c97478 44px); }
  .tray { flex: 1; display: flex; align-items: center; padding-right: 12px; margin-right: 5px; border-right: 1px solid #555; justify-content: flex-end; gap: 16px; }
  .batt { margin-left: -2px; margin-right: 3px; }
  .clock { width: 82px; display: flex; flex-direction: column; text-align: center; font-size: 15.600px; line-height: 24px; color: #fff; margin-left: -7px; letter-spacing: -.1px; }
  .date { white-space: nowrap; }
  .notif { position: relative; width: 43px; padding-left: 6px; }
  .notif b { position: absolute; left: 15px; top: 10px; width: 22px; height: 22px; border-radius: 50%; background: #333; border: 1px solid #888; color: #fff; font-size: 14px; font-weight: 600; line-height: 20px; text-align: center; }

  .status { position: absolute; left: 0; top: 999px; width: 426px; height: 28px; padding-left: 6px; background: #5c5855; border-top: 1px solid #999; border-top-right-radius: 5px; color: #fff; font-size: 15.600px; line-height: 29px; white-space: nowrap; }
  .dialog { position: absolute; left: 657px; top: 91px; width: 606px; height: 176px; padding: 22px 21px 0 21px; border-radius: 5px; background: #fff; box-shadow: 0 1px 5px rgba(0, 0, 0, .55); color: #202124; white-space: nowrap; }
  .says { font-size: 19px; line-height: 30px; }
  .msg { margin-top: 10px; font-size: 16.850px; line-height: 28px; }
  .btns { display: flex; justify-content: flex-end; gap: 13px; margin-top: 21px; }
  .btns button { width: 93px; height: 44px; border-radius: 5px; font-size: 15.200px; font-weight: 600; letter-spacing: -.1px; line-height: 40px; }
  .btns .ok { width: 88px; height: 40px; margin: 2px 0; border-radius: 3px; background: #1a73e8; color: #fff; line-height: 38px; box-shadow: 0 0 0 1px #fff, 0 0 0 3px #4285f4; }
  .btns .cancel { background: #fff; border: 1px solid #dadce0; color: #1a73e8; }
</style>
